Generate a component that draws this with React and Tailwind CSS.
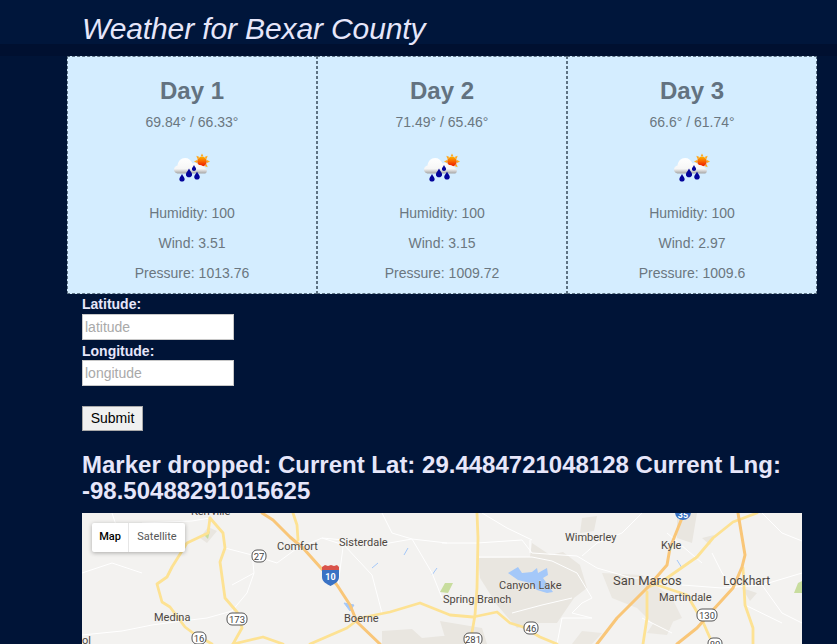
const days = [
  { name: "Day 1", temp: "69.84° / 66.33°", hum: "100", wind: "3.51", pres: "1013.76" },
  { name: "Day 2", temp: "71.49° / 65.46°", hum: "100", wind: "3.15", pres: "1009.72" },
  { name: "Day 3", temp: "66.6° / 61.74°", hum: "100", wind: "2.97", pres: "1009.6" },
];

function WeatherIcon() {
  const rays = [0, 45, 90, 135, 180, 225, 270, 315];
  return (
    <svg width="38" height="30" viewBox="0 0 38 30" className="block">
      <defs>
        <linearGradient id="cl" x1="0" y1="0" x2="0" y2="1">
          <stop offset="0" stopColor="#ffffff" />
          <stop offset="0.7" stopColor="#f6f6f6" />
          <stop offset="1" stopColor="#a5a5a5" />
        </linearGradient>
        <linearGradient id="su" x1="0" y1="0" x2="0" y2="1">
          <stop offset="0" stopColor="#ffb000" />
          <stop offset="1" stopColor="#f01500" />
        </linearGradient>
      </defs>
      {rays.map((r) => (
        <polygon key={r} points="29,0.5 30.5,3.5 27.500,3.500" fill="#ffa91f" transform={`rotate(${r} 29 8.5)`} />
      ))}
      <circle cx="29" cy="8.5" r="4.8" fill="url(#su)" />
      <path d="M5.500 20.500C2 20.500 1 18 1 16.500 1 14.500 2.500 13 4.500 12.500 5 8 8 5 12 5 15.500 5 18 7 19.500 10.500 21 9.500 24 9.500 26 12 28 11.500 31 13 32 15 34 16 34.500 19 33 20 32.500 20.500 32 20.500 31 20.500Z" fill="url(#cl)" />
      {[[9, 21, 0.95], [16, 15.5, 1.1], [21, 12, 0.75], [24, 18.5, 1]].map(([x, y, s], i) => (
        <path key={i} transform={`translate(${x} ${y}) scale(${s})`} d="M0 0C1 2.600 2.800 3.600 2.800 5.400 2.800 7 1.500 8 0 8-1.500 8-2.800 7-2.800 5.400-2.800 3.600-1 2.600 0 0Z" fill="#04049a" />
      ))}
    </svg>
  );
}

function Card({ d }) {
  return (
    <div className="h-[238px] border border-dashed border-[#5d7283] text-center text-[#6b7780]">
      <h3 className="mt-[21px] mb-[8px] text-[24px] leading-[26px] font-bold text-[#627280]">{d.name}</h3>
      <p className="text-[14px] leading-[20px]">{d.temp}</p>
      <div className="mt-[21px] mb-[20px] flex justify-center">
        <WeatherIcon />
      </div>
      <p className="mb-[10px] text-[14px] leading-[20px]">Humidity: {d.hum}</p>
      <p className="mb-[10px] text-[14px] leading-[20px]">Wind: {d.wind}</p>
      <p className="text-[14px] leading-[20px]">Pressure: {d.pres}</p>
    </div>
  );
}

function Shield({ x, y, t, w = 14 }) {
  return (
    <g>
      <rect x={x - w / 2} y={y - 6} width={w} height={12} rx="5" fill="#fff" stroke="#555" strokeWidth="1" />
      <text x={x} y={y + 3.5} textAnchor="middle" fontSize="9.5" fill="#444" fontFamily="Roboto, sans-serif">{t}</text>
    </g>
  );
}

function Label({ x, y, t, s = 11 }) {
  return (
    <text x={x} y={y} fontSize={s} fill="#4d473f" fontFamily="Roboto, sans-serif" stroke="#f3f2f0" strokeWidth="0.4" paintOrder="stroke">{t}</text>
  );
}

function MapArt() {
  const minor = [
    "M60 10L110 8 128 5M143 35L170 42 195 50 214 36 240 25 262 27 290 33 330 26 365 30",
    "M0 122L40 118 70 112 100 108 125 105 150 98 165 80 172 60 150 72M172 60L170 40",
    "M240 25L262 32 290 62 300 100M330 26L350 60 360 85M262 27L256 72M300 0L310 20 330 26",
    "M360 30L395 30 440 27 450 40 495 43 515 55 550 65 585 65M448 27L448 40",
    "M395 44L450 44 470 48 495 60 510 85 500 90 490 100 510 105M430 100L460 92 490 85",
    "M600 72L640 75 680 72 720 60M651 75L640 60 630 40M680 72L700 100 720 110M663 92L700 110",
    "M400 0L425 15 450 27M560 0L540 20 515 30 500 43M680 0L700 20 720 28M585 20L620 50",
    "M475 131L480 105 510 105M560 105L590 120M0 60L30 50 60 60M30 0L40 30",
  ];
  return (
    <svg viewBox="0 0 720 131" width="720" height="131" className="block">
      <rect width="720" height="131" fill="#f3f2f0" />
      <path d="M396 45L448 44 450 30 468 42 481 39 498 52 505 75 492 85 475 110 458 110 435 115 415 92 398 65Z" fill="#e9e6e0" />
      <path d="M520 60L560 62 590 85 600 105 575 115 555 95 530 85Z M585 90L595 100 585 122 565 120Z M500 118L520 120 510 131 490 131Z" fill="#ebe8e2" />
      <path d="M300 118L330 116 340 125 370 122 390 131 300 131Z M620 25L632 22 628 32Z M500 5L515 3 512 18 498 20Z M595 0L615 0 610 30 595 25Z M660 75L675 80 668 88Z M126 14L135 18 125 30 118 25Z M358 108L400 115 405 131 365 131Z" fill="#e9e6e0" />
      <path d="M426 60L436 54 440 60 450 59 455 55 456 60 465 55 466 62 461 65 471 79 465 80 455 77 448 70 436 67Z" fill="#a4c8f9" />
      <path d="M358 79L363 70 371 70 366 80Z M122 22L128 18 126 26Z M716 70L720 68 720 80 712 80Z" fill="#c8dd9e" />
      <path d="M262 90L272 92 268 98Z M595 47L600 55M290 55L296 50M322 42L326 35M355 55L350 62" fill="#a4c8f9" stroke="#a4c8f9" />
      <g fill="none" stroke="#fff" strokeWidth="1" strokeLinejoin="round">
        {minor.map((d) => <path key={d} d={d} />)}
      </g>
      <g fill="none" stroke="#fde293" strokeWidth="2.8" strokeLinejoin="round" strokeLinecap="round">
        <path d="M211 0L215 12 216 27" />
        <path d="M128 5L126 20 105 30 90 54 85 64 75 71 80 89 88 94 103 114 111 120 130 131" />
        <path d="M128 5L141 20 143 35 138 49 143 85 155 99 160 115 151 131" />
        <path d="M151 131L181 124 201 131M228 131L265 115 278 105 308 99 338 90 368 102 391 104 415 99 428 110 441 114 458 124 475 131" />
        <path d="M395 0L396 25 395 75 393 102 388 131" />
        <path d="M675 0L651 9 631 25 615 44 585 65 565 75" />
        <path d="M661 55L663 92 671 115 671 131" />
        <path d="M565 79L565 105 561 131" />
        <path d="M575 72L605 82 621 109 628 125" />
      </g>
      <g fill="none" stroke="#f9c678" strokeWidth="3" strokeLinejoin="round" strokeLinecap="round">
        <path d="M180 0L191 7 208 24 221 35 238 54 255 72 268 92 275 109 298 131" />
        <path d="M600 5L588 35 585 52 565 75 535 105 515 131" />
        <path d="M656 0L663 42 660 54 651 75 631 97 615 115 595 131" />
      </g>
      <text x={109} y={2} fontSize="11" fill="#4d473f" fontFamily="Roboto, sans-serif">Kerrville</text>
      <Label x={195} y={37} t="Comfort" />
      <Label x={257} y={33} t="Sisterdale" />
      <Label x={72} y={108} t="Medina" />
      <Label x={262} y={109} t="Boerne" />
      <Label x={483} y={28} t="Wimberley" />
      <Label x={579} y={36} t="Kyle" />
      <Label x={531} y={72} t="San Marcos" s={13} />
      <Label x={641} y={72} t="Lockhart" s={12} />
      <Label x={577} y={88} t="Martindale" />
      <Label x={417} y={76} t="Canyon Lake" />
      <Label x={361} y={90} t="Spring Branch" />
      <Label x={0} y={131} t="ol" />
      <Shield x={177} y={43} t="27" />
      <Shield x={155} y={106} t="173" w={20} />
      <Shield x={117} y={125} t="16" />
      <Shield x={449} y={115} t="46" />
      <Shield x={625} y={102} t="130" w={20} />
      <Shield x={633} y={131} t="80" />
      <Shield x={391} y={126} t="281" w={18} />
      <path d="M240 54H257V64C257 69 252 71 248.500 73 245 71 240 69 240 64Z" fill="#3a72c4" />
      <path d="M240 54L243 52 246 53 249 52 252 53 255 52 257 54 257 57H240Z" fill="#d9534a" />
      <text x={248.5} y={67} textAnchor="middle" fontSize="9" fontWeight="700" fill="#fff" fontFamily="Roboto, sans-serif">10</text>
      <circle cx="601" cy="-1" r="8" fill="#3a72c4" />
      <text x={601} y={5} textAnchor="middle" fontSize="9" fontWeight="700" fill="#fff" fontFamily="Roboto, sans-serif">35</text>
    </svg>
  );
}

export default function App() {
  return (
    <div className="h-[644px] overflow-hidden bg-[#001437] font-['Liberation_Sans',Arial,sans-serif]">
      <div className="h-[44px] bg-[#00163b] pl-[82px]">
        <h1 className="pt-[14px] text-[30px] leading-[30px] font-normal tracking-[-0.12px] text-[#e6e6fa] italic">Weather for Bexar County</h1>
      </div>
      <div className="h-[12px] bg-[#001030]" />
      <div className="ml-[67px] grid w-[750px] grid-cols-3 bg-[#d4edff]">
        {days.map((d) => <Card key={d.name} d={d} />)}
      </div>
      <div className="pl-[82px]">
        <form className="flex flex-col items-start">
          <label className="mt-[2px] text-[14px] leading-[17px] font-bold text-[#e6e6fa]">Latitude:</label>
          <input placeholder="latitude" className="mt-[1px] h-[26px] w-[152px] border border-[#c8c8c8] bg-white px-[2px] text-[14px] placeholder:text-[#a9a9a9]" />
          <label className="mt-[2px] text-[14px] leading-[18px] font-bold text-[#e6e6fa]">Longitude:</label>
          <input placeholder="longitude" className="h-[26px] w-[152px] border border-[#c8c8c8] bg-white px-[2px] text-[14px] placeholder:text-[#a9a9a9]" />
          <button type="button" className="mt-[20px] h-[25px] w-[61px] border border-[#a9a9a9] bg-[#f0f0f0] text-[14px] text-black">Submit</button>
        </form>
        <h3 className="mt-[21px] mb-[8px] w-[720px] text-[24px] leading-[26.4px] font-bold text-[#e6e6fa]">Marker dropped: Current Lat: 29.4484721048128 Current Lng: -98.50488291015625</h3>
        <div className="relative h-[131px] w-[720px] overflow-hidden">
          <MapArt />
          <div className="absolute top-[10px] left-[10px] flex h-[29px] rounded-[2px] bg-white font-['Roboto',sans-serif] text-[11px] shadow-[0_1px_4px_rgba(0,0,0,0.3)]">
            <div className="flex w-[37px] items-center justify-center border-r border-[#e6e6e6] font-medium text-black">Map</div>
            <div className="flex w-[56px] items-center justify-center text-[#565656]">Satellite</div>
          </div>
        </div>
      </div>
    </div>
  );
}
